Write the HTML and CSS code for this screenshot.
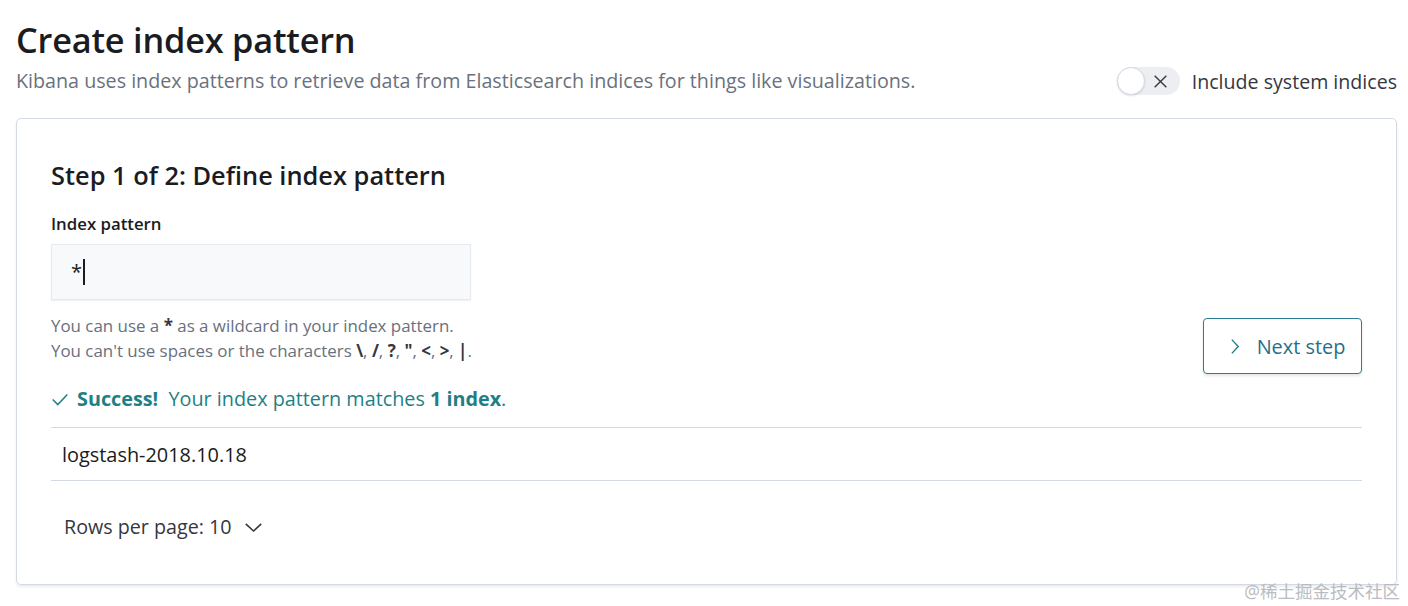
FILE: index.html
```html
<!DOCTYPE html>
<html>
<head>
<meta charset="utf-8">
<link rel="stylesheet" href="styles.css">
</head>
<body>
<div class="page">
  <header class="header">
    <div class="header-text">
      <h1 class="title">Create index pattern</h1>
      <p class="subtitle">Kibana uses index patterns to retrieve data from Elasticsearch indices for things like visualizations.</p>
    </div>
    <div class="switch-wrap">
      <span class="switch">
        <span class="knob"></span>
        <svg class="switch-x" width="17" height="17" viewBox="0 0 16 16"><path d="M2.5 2.5 L13.5 13.5 M13.5 2.5 L2.5 13.5" stroke="#343741" stroke-width="1.3" fill="none"/></svg>
      </span>
      <span class="switch-label">Include system indices</span>
    </div>
  </header>

  <section class="panel">
    <h2 class="step-title">Step 1 of 2: Define index pattern</h2>
    <div class="form-row">
      <div class="form-left">
        <label class="label">Index pattern</label>
        <div class="input"><span class="input-value">*</span><span class="caret"></span></div>
        <div class="help">
          <div>You can use a <b>*</b> as a wildcard in your index pattern.</div>
          <div>You can't use spaces or the characters <b>\</b>, <b>/</b>, <b>?</b>, <b>"</b>, <b>&lt;</b>, <b>&gt;</b>, <b>|</b>.</div>
        </div>
      </div>
      <button class="next-btn">
        <svg width="17" height="17" viewBox="0 0 16 16"><path d="M5.5 1.5 L11.5 8 L5.5 14.5" stroke="#1f7a8c" stroke-width="1.3" fill="none"/></svg>
        <span>Next step</span>
      </button>
    </div>
    <div class="success">
      <svg width="18" height="18" viewBox="0 0 16 16"><path d="M1.5 8.5 L6 13 L14.5 4" stroke="#1e7f86" stroke-width="1.3" fill="none"/></svg>
      <span><b>Success!</b>&nbsp; Your index pattern matches <b>1 index</b>.</span>
    </div>
    <div class="table">
      <div class="row">logstash-2018.10.18</div>
    </div>
    <div class="pager">
      <span>Rows per page: 10</span>
      <svg width="19" height="19" viewBox="0 0 16 16"><path d="M1.5 5 L8 11 L14.5 5" stroke="#343741" stroke-width="1.3" fill="none"/></svg>
    </div>
  </section>
  <div class="watermark">@稀土掘金技术社区</div>
</div>
</body>
</html>
```
FILE: styles.css
```css
* { box-sizing: border-box; }
html, body { margin: 0; padding: 0; background: #fff; }
body {
  font-family: "Open Sans", "Noto Sans CJK SC", sans-serif;
  color: #343741;
  width: 1408px;
  height: 606px;
  overflow: hidden;
}
.page {
  padding: 18px 11px 0 16px;
  position: relative;
  height: 606px;
}
.header {
  display: flex;
  justify-content: space-between;
  align-items: flex-end;
}
.title {
  margin: 0;
  font-size: 34.3px;
  font-weight: 600;
  line-height: 44px;
  color: #1a1c21;
  letter-spacing: -0.2px;
}
.subtitle {
  margin: 6px 0 0;
  font-size: 19.7px;
  line-height: 26px;
  color: #6a717d;
}
.switch-wrap {
  display: flex;
  align-items: center;
  gap: 12px;
  margin-bottom: -1px;
}
.switch {
  position: relative;
  width: 63px;
  height: 28px;
  border-radius: 14px;
  background: #eceef2;
  display: flex;
  align-items: center;
  justify-content: flex-end;
  padding-right: 11px;
}
.knob {
  position: absolute;
  left: 0;
  top: 0;
  width: 28px;
  height: 28px;
  border-radius: 50%;
  background: #fff;
  border: 1px solid #d3dae6;
  box-shadow: 0 1px 2px rgba(0,0,0,0.12);
}
.switch-label {
  font-size: 19.6px;
  color: #343741;
}
.panel {
  margin-top: 24px;
  border: 1px solid #d3dae6;
  border-radius: 5px;
  box-shadow: 0 2px 3px rgba(0,0,0,0.08);
  padding: 36px 34px 0 34px;
  height: 467px;
  width: 1381px;
}
.step-title {
  margin: 0;
  font-size: 25.4px;
  font-weight: 600;
  line-height: 40px;
  color: #1a1c21;
}
.form-row {
  display: flex;
  justify-content: space-between;
  align-items: flex-start;
  margin-top: 19px;
}
.label {
  display: block;
  font-size: 16.8px;
  font-weight: 600;
  line-height: 20px;
  color: #1a1c21;
}
.input {
  margin-top: 10px;
  width: 420px;
  height: 56px;
  background: #f8f9fb;
  border: 1px solid #e6e9ee;
  box-shadow: 0 1px 1px rgba(0,0,0,0.05);
  display: flex;
  align-items: center;
  padding-left: 19px;
}
.input-value {
  font-size: 20px;
  color: #1a1c21;
  line-height: 20px;
}
.caret {
  width: 2px;
  height: 26px;
  background: #1a1c21;
  margin-left: 1px;
}
.help {
  margin-top: 13px;
  font-size: 16.9px;
  line-height: 25px;
  color: #69707d;
}
.help b { color: #343741; font-weight: 700; }
.next-btn {
  margin-top: 104px;
  width: 159px;
  height: 56px;
  border: 1px solid #2a7d98;
  border-radius: 4px;
  background: #fff;
  box-shadow: 0 2px 3px rgba(0,0,0,0.1);
  display: flex;
  align-items: center;
  justify-content: center;
  gap: 14px;
  font-family: "Open Sans", sans-serif;
  font-size: 19.9px;
  color: #1f6f8c;
  padding: 0 0 0 6px;
}
.success {
  margin-top: 12px;
  display: flex;
  align-items: center;
  gap: 8px;
  font-size: 19.8px;
  color: #1e7f86;
  line-height: 26px;
}
.success b { font-weight: 700; }
.table {
  margin-top: 15px;
  border-top: 1px solid #d3dae6;
  border-bottom: 1px solid #d3dae6;
}
.row {
  height: 52px;
  display: flex;
  align-items: center;
  padding-left: 11px;
  font-size: 19.9px;
  color: #1a1c21;
}
.pager {
  margin-top: 33px;
  padding-left: 13px;
  display: flex;
  align-items: center;
  gap: 12px;
  font-size: 19.7px;
  line-height: 26px;
  color: #343741;
}
.watermark {
  position: absolute;
  right: 8px;
  bottom: 3px;
  font-size: 17.5px;
  color: #b9bcc2;
}
```
